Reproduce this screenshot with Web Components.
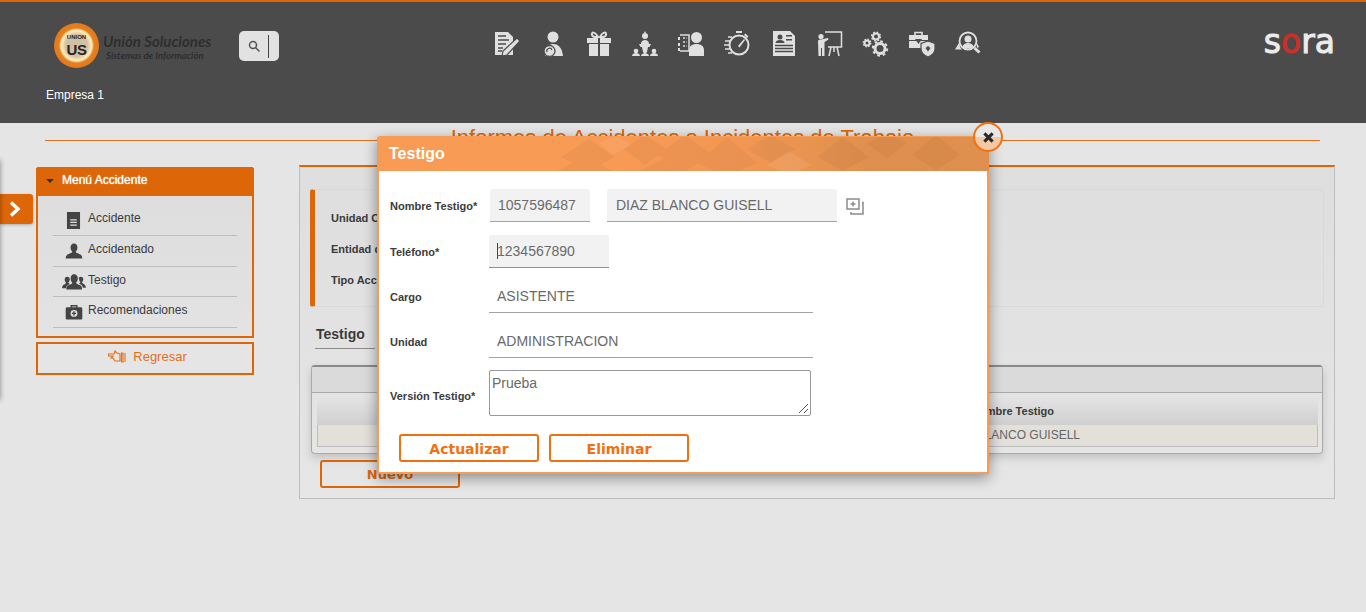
<!DOCTYPE html>
<html lang="es">
<head>
<meta charset="utf-8">
<title>Testigo</title>
<style>
  html, body { margin: 0; height: 100%; }
  body { background: #e5e5e5; font-family: "Liberation Sans", Arial, sans-serif; position: relative; height: 612px; overflow: hidden; }
</style>
</head>
<body>
<app-header></app-header>
<page-title>Informes de Accidentes o Incidentes de Trabajo</page-title>
<page-body></page-body>
<side-tab></side-tab>
<testigo-modal></testigo-modal>

<script>
  const BG = '#4b4b4b';
  // Iconos de la barra superior y del menu lateral (viewBox 26x26)
  const ICONOS = {
    informe: `<path d="M1 1h13l5 5v18H1z"/><path fill="none" stroke="${BG}" stroke-width="1.3" d="M4 5h8M4 9h11M4 13h8M4 17h5M4 20h4"/><path stroke="${BG}" stroke-width="1.2" d="M23 7l3 3L13 24l-5 1 1-5z"/>`,
    persona: `<circle cx="13" cy="6" r="5.5"/><path d="M5 25c0-8 3-12 8-12s9 3 10 12z"/><circle cx="9.500" cy="20" r="5.500" stroke="${BG}" stroke-width="1.300"/><path fill="none" stroke="${BG}" stroke-width="1.200" d="M7 21a2.500 2.500 0 0 1 5-2"/>`,
    regalo: `<path fill="none" stroke="currentColor" stroke-width="2" d="M12 6C9 0 5 1 6 4s3 2 6 2zM14 6c3-6 7-5 6-2s-3 2-6 2z"/><path d="M1 7h11v5H1zM14 7h11v5H14zM3 13h9v12H3zM14 13h9v12H14z"/>`,
    podio: `<circle cx="13" cy="5" r="3"/><path d="M13 0l1 2h-2zM9 13c0-3 2-4 4-4s4 1 4 4z"/><path d="M7 13h12l-1.500 3H16l-1 5h-4l-1-5H8.500z"/><circle cx="4" cy="20" r="2.300"/><path d="M0 25c0-2 2-3 4-3s4 1 4 3z"/><circle cx="13" cy="21.500" r="1.500"/><path d="M9 25c0-2 2-2.500 4-2.500s4 .5 4 2.500z"/><circle cx="22" cy="20" r="2.300"/><path d="M18 25c0-2 2-3 4-3s4 1 4 3z"/>`,
    cliente: `<circle cx="18.500" cy="6.500" r="5.500"/><path d="M11 25v-6c0-4 3.500-6 7.500-6s7.500 2 7.500 6v6z"/><path fill="none" stroke="currentColor" stroke-width="1.500" d="M2 4h9v16H2"/><path fill="none" stroke="currentColor" stroke-width="1.500" stroke-dasharray="2 1.500" d="M5 7h4M5 11h4M5 15h4"/><path stroke="currentColor" stroke-width="2" fill="none" d="M1 6v3M1 12v3M1 17v3"/>`,
    reloj: `<circle cx="15" cy="14" r="9.500" fill="none" stroke="currentColor" stroke-width="2"/><path d="M12 0h6v2h-6zM21.500 2.500l3 3-1.500 1.500-3-3z"/><path d="M14 15l6-7 1 1-5.500 7.500z"/><path fill="none" stroke="currentColor" stroke-width="1.500" d="M1 10h6M0 14h5M1 18h6M4 6h4M4 22h4"/>`,
    hoja: `<path d="M2 0h17l5 5v20H2z"/><circle cx="9" cy="6" r="2.500" fill="${BG}"/><path fill="${BG}" d="M4.500 12c0-2 2-3 4.500-3s4.500 1 4.500 3zM15 4h6v1.500h-6zM15 8h6v1.500h-6z"/><path fill="none" stroke="${BG}" stroke-width="1.300" d="M4 14.500h18M4 17.500h18M4 20.500h18"/>`,
    tablero: `<circle cx="4" cy="5.500" r="2.600"/><path d="M1 10c0-1 1.500-1.500 3-1.500L11 7l.5 1.500L7.500 11v14H5v-8H4v8H1.500z"/><path fill="none" stroke="currentColor" stroke-width="1.500" d="M8 1h16.500v15H11M14 16l-2 9M20 16l2 9M17 16v5"/>`,
    engranes: `<g fill="none" stroke="currentColor"><circle cx="17" cy="17.500" r="5" stroke-width="3"/><circle cx="17" cy="17.500" r="7.200" stroke-width="2" stroke-dasharray="2.700 2.950"/><circle cx="13" cy="5.500" r="3" stroke-width="2"/><circle cx="13" cy="5.500" r="4.400" stroke-width="1.500" stroke-dasharray="1.800 1.650"/><circle cx="4" cy="12" r="2.500" stroke-width="2"/><circle cx="4" cy="12" r="3.800" stroke-width="1.300" stroke-dasharray="1.500 1.480"/></g>`,
    maletin: `<path fill="none" stroke="currentColor" stroke-width="1.600" d="M6 4V1.500h7V4"/><path d="M0 4h19v5H0zM0 10h19v7H0z"/><path fill="${BG}" d="M6 8h7l-3.500 5z"/><path stroke="${BG}" stroke-width="1.200" d="M19 10l7 2.500V18c0 4-3.500 6.500-7 8-3.500-1.500-7-4-7-8v-5.500z"/><path fill="${BG}" d="M19 15l2.500 2-2.500 3.500-2.500-3.500z"/>`,
    buscar: `<circle cx="13" cy="10" r="8.500" fill="none" stroke="currentColor" stroke-width="1.800"/><circle cx="13" cy="8" r="3.500"/><path d="M7.500 16c.5-3 3-4 5.500-4s5 1 5.500 4c-3 2-8 2-11 0z"/><path d="M4.500 11L0 18.500h7L5 16zM21.500 11l2.500 5-2 1z"/><path stroke="currentColor" stroke-width="3" d="M19.500 17l5 4.500"/>`,
    doc: `<path d="M3 0h20v26H3z"/><path fill="none" stroke="#e0e0e0" stroke-width="1.800" d="M8 12h10M8 16h10M8 20h10"/>`,
    usuario: `<path d="M13 2c3.500 0 5 2.500 5 6 0 2.500-1 4.500-2.500 6 0 2 5.500 2.500 8 5 1 1 1.500 3 1.500 5H1c0-2 .5-4 1.500-5 2.500-2.500 8-3 8-5C9 12.500 8 10.500 8 8c0-3.500 1.500-6 5-6z"/>`,
    grupo: `<path d="M13 5c3 0 4.500 2 4.500 5 0 2-1 4-2 5 0 2 4.500 2 6 4 1 1 1 3 1 4H4c0-1 0-3 1-4 1.500-2 6-2 6-4-1-1-2-3-2-5 0-3 1.500-5 4-5z"/><path d="M5 8c2 0 3 1.500 3 3 0 1.500-.5 3-1.500 3.500 0 1 .5 1.500 1.500 2-2 1-4 2-4.500 5H-1c0-2 .5-3 1.500-4 1-.5 3-1.500 3-2.500-1-1-1.500-2.500-1.500-3.500C2 9.500 3 8 5 8zM21 8c2 0 3 1.500 3 3 0 1-.5 2.500-1.500 3.500 0 1 2 2 3 2.500 1 1 1.500 2 1.500 4h-3.500c-.5-3-2.500-4-4.500-5 1-.5 1.500-1 1.500-2-1-.5-1.500-2-1.500-3.500C18 9.500 19 8 21 8z"/>`,
    botiquin: `<path fill-rule="evenodd" d="M8 6V3h10v3h5c1 0 2 1 2 2v14c0 1-1 2-2 2H3c-1 0-2-1-2-2V8c0-1 1-2 2-2zm2 0h6V5h-6z"/><circle cx="13" cy="15" r="5" fill="#e0e0e0"/><path stroke="currentColor" stroke-width="2" d="M13 12v6M10 15h6"/>`
  };

  class AppIcon extends HTMLElement {
    constructor() {
      super();
      const size = this.getAttribute('size') || 26;
      const svgStyle = 'display:block;overflow:visible';
      this.attachShadow({ mode: 'open' }).innerHTML = `
        <style>:host { display: block; width: ${size}px; height: ${size}px; flex: none; }</style>
        <svg width="${size}" height="${size}" viewBox="0 0 26 26" fill="currentColor" style="${svgStyle}">${ICONOS[this.getAttribute('name')]}</svg>`;
    }
  }

  class AppHeader extends HTMLElement {
    constructor() {
      super();
      const iconos = ['informe', 'persona', 'regalo', 'podio', 'cliente', 'reloj', 'hoja', 'tablero', 'engranes', 'maletin', 'buscar'];
      this.attachShadow({ mode: 'open' }).innerHTML = `
        <style>
          :host { display: block; height: 121px; background: ${BG}; border-top: 2px solid #dd6708; box-sizing: content-box; }
          .top { display: flex; align-items: flex-start; padding: 21px 31px 0 54px; height: 46px; }
          .logo { display: flex; width: 185px; flex: none; }
          .ring { width: 45px; height: 45px; border-radius: 50%; flex: none; box-sizing: border-box; background: radial-gradient(circle closest-side, #cfc0a6 0 48%, #f2cfa0 56%, #fbeec4 66%, #f0c98a 72%, #e5801f 78%, #e3791d 100%); display: flex; flex-direction: column; align-items: center; justify-content: center; color: #262626; font-weight: 700; }
          .ring small { font-size: 6px; line-height: 7px; }
          .ring b { font-size: 15px; line-height: 17px; letter-spacing: -.5px; }
          .name { margin: 9px 0 0 4px; color: #2e2e2e; font: italic 700 15px/18px Lato, sans-serif; white-space: nowrap; }
          .name span { display: block; font-size: 9.500px; line-height: 11px; padding-left: 3px; }
          .search { width: 40px; height: 30px; margin: 8px 0 0 0; background: #e2e2e2; border-radius: 5px; display: flex; align-items: center; box-sizing: border-box; padding-left: 9px; flex: none; }
          .search i { display: block; width: 1px; height: 23px; background: #444; margin-left: 8px; }
          nav { display: flex; gap: 20.100px; color: #e0e0e0; margin: 8px 0 0 215px; flex: none; filter: blur(.3px); }
          .sora { margin-left: auto; margin-top: 1px; color: #ececec; font: 400 33px/36px "DejaVu Sans", sans-serif; -webkit-text-stroke: 1px currentColor; }
          .sora em { font-style: normal; color: #c9302a; }
          .empresa { margin: 19px 0 0 46px; color: #fff; font-size: 12px; line-height: 14px; }
        </style>
        <div class="top">
          <div class="logo">
            <div class="ring"><small>UNION</small><b>US</b></div>
            <div class="name">Unión Soluciones<span>Sistemas de Información</span></div>
          </div>
          <div class="search">
            <svg width="12" height="12" viewBox="0 0 12 12" fill="none" stroke="#555" stroke-width="1.500"><circle cx="5" cy="5" r="3.500"/><path d="M7.500 7.500l4 4"/></svg>
            <i></i>
          </div>
          <nav>${iconos.map(n => `<app-icon name="${n}"></app-icon>`).join('')}</nav>
          <div class="sora">s<em>o</em>ra</div>
        </div>
        <div class="empresa">Empresa 1</div>`;
    }
  }

  class PageTitle extends HTMLElement {
    constructor() {
      super();
      this.attachShadow({ mode: 'open' }).innerHTML = `
        <style>
          :host { display: block; margin: 0 46px 0 45px; height: 17px; border-bottom: 1px solid #e2701c; text-align: center; color: #dd6708; font-size: 22px; line-height: 29px; white-space: nowrap; }
        </style>
        <slot></slot>`;
    }
  }

  class MenuItem extends HTMLElement {
    constructor() {
      super();
      this.attachShadow({ mode: 'open' }).innerHTML = `
        <style>
          :host { display: flex; align-items: center; box-sizing: border-box; padding-bottom: 4px; border-bottom: 1px solid #bdbdbd; color: #3a3a3a; font-size: 12px; }
          .ico { width: 35px; display: flex; justify-content: center; color: #444; padding-left: 6px; box-sizing: border-box; margin-top: ${this.getAttribute('icon') === 'doc' ? 5 : 3}px; }
        </style>
        <div class="ico"><app-icon name="${this.getAttribute('icon')}" size="${this.getAttribute('size') || 18}"></app-icon></div>
        <slot></slot>`;
    }
  }

  class SideMenu extends HTMLElement {
    constructor() {
      super();
      this.attachShadow({ mode: 'open' }).innerHTML = `
        <style>
          :host { display: block; margin-top: 2px; }
          .box { border: 2px solid #dd6708; border-top: 0; border-radius: 3px 3px 0 0; background: linear-gradient(#dcdcdc, #e3e3e3); height: 171px; box-sizing: border-box; }
          h3 { margin: 0 -2px; height: 29px; box-sizing: border-box; padding: 0 0 3px 10px; background: #dd6708; border-radius: 3px 3px 0 0; color: #fff; font-size: 12px; font-weight: 400; display: flex; align-items: center; text-shadow: 0 0 1px #fff; }
          h3 i { width: 0; height: 0; border: 4px solid transparent; border-top-color: #333; border-bottom: 0; margin: 2px 8px 0 0; }
          nav { margin: 9px 15px 0; display: grid; grid-template-rows: 31px 31px 30px 31px; }
          .back { margin-top: 4px; height: 33px; box-sizing: border-box; padding: 0 0 4px 5px; border: 2px solid #dd6708; display: flex; align-items: center; justify-content: center; gap: 7px; color: #e2701c; font-size: 13px; }
        </style>
        <div class="box">
          <h3><i></i>Menú Accidente</h3>
          <nav>
            <menu-item icon="doc" size="17">Accidente</menu-item>
            <menu-item icon="usuario">Accidentado</menu-item>
            <menu-item icon="grupo" size="22">Testigo</menu-item>
            <menu-item icon="botiquin">Recomendaciones</menu-item>
          </nav>
        </div>
        <div class="back">
          <svg width="18" height="14" viewBox="0 0 18 14" fill="none" stroke="#e2701c" stroke-width="1.100"><path d="M.5 4H6l1-3 2 2 3 1v7H7L5 8H3l2-2H.5zM13.500 3h1.500v9h-1.500zM17 3v9"/></svg>
          Regresar
        </div>`;
    }
  }

  class MainPanel extends HTMLElement {
    constructor() {
      super();
      this.attachShadow({ mode: 'open' }).innerHTML = `
        <style>
          :host { display: block; height: 334px; box-sizing: border-box; border: 1px solid #bdbdbd; border-top: 2px solid #dd6708; background: linear-gradient(#dedede, #e6e6e6); padding: 22px 10px 0; color: #3a3a3a; }
          .info { height: 118px; box-sizing: border-box; border: 1px solid #d9d9d9; border-left: 5px solid #dd6708; border-radius: 3px; padding: 12px 16px; display: grid; grid-auto-rows: 31px; font-size: 11px; font-weight: 700; align-items: center; }
          h4 { margin: 19px 0 0 5px; width: 59px; height: 22px; padding-left: 1px; font-size: 14px; line-height: 17px; border-bottom: 1px solid #8c8c8c; white-space: nowrap; }
          .tabla { margin: 16px 1px 0; height: 89px; box-sizing: border-box; border: 1px solid #aaa; border-top: 2px solid #8a8a8a; border-radius: 4px; box-shadow: 0 4px 8px rgba(0,0,0,.15); padding: 0; }
          .bar { height: 25px; background: #dadada; border-bottom: 1px solid #aaa; }
          .grid { margin: 5px 4px 0 5px; }
          .th { height: 27px; background: linear-gradient(#e3e3e3, #cfcfcf); font-size: 11px; font-weight: 700; line-height: 27px; padding-left: 654px; }
          .td { height: 22px; box-sizing: border-box; background: #e3dfd9; border: 1px solid #bdbdbd; border-top: 0; font-size: 12px; line-height: 21px; padding-left: 628px; color: #666; }
          .nuevo { display: block; margin: 6px 0 0 10px; width: 140px; height: 28px; box-sizing: border-box; border: 2px solid #dd6708; border-radius: 3px; text-align: center; color: #dd6708; font: 700 13px/26px "DejaVu Sans", sans-serif; }
        </style>
        <div class="info">
          <div>Unidad Organizacional</div>
          <div>Entidad de Salud</div>
          <div>Tipo Accidente</div>
        </div>
        <h4>Testigo</h4>
        <div class="tabla">
          <div class="bar"></div>
          <div class="grid">
            <div class="th">Nombre Testigo</div>
            <div class="td">DIAZ BLANCO GUISELL</div>
          </div>
        </div>
        <div class="nuevo">Nuevo</div>`;
    }
  }

  class PageBody extends HTMLElement {
    constructor() {
      super();
      this.attachShadow({ mode: 'open' }).innerHTML = `
        <style>
          :host { display: grid; grid-template-columns: 218px 1036px; column-gap: 45px; padding: 24px 31px 0 36px; }
        </style>
        <side-menu></side-menu>
        <main-panel></main-panel>`;
    }
  }

  // Pestana que abre el menu lateral y la sombra del cajon cerrado
  class SideTab extends HTMLElement {
    constructor() {
      super();
      this.attachShadow({ mode: 'open' }).innerHTML = `
        <style>
          :host { position: absolute; left: 0; top: 194px; width: 33px; height: 30px; background: #dd6708; border-radius: 0 3px 3px 0; display: flex; align-items: center; justify-content: center; box-shadow: 0 1px 3px rgba(0,0,0,.25); padding-right: 3px; box-sizing: border-box; }
          .sombra { position: absolute; left: -4px; top: -34px; width: 4px; height: 240px; box-shadow: 0 0 5px rgba(0,0,0,.45); }
        </style>
        <div class="sombra"></div>
        <svg width="14" height="16" viewBox="0 0 14 16" fill="none" stroke="#fff" stroke-width="3.500"><path d="M3 1.500L10 8l-7 6.500"/></svg>`;
    }
  }

  class FormRow extends HTMLElement {
    constructor() {
      super();
      this.attachShadow({ mode: 'open' }).innerHTML = `
        <style>
          :host { display: grid; grid-template-columns: 99px auto; align-items: center; }
          label { font-size: 11px; font-weight: 700; color: #3c3c3c; padding-top: var(--label-pt, 0); white-space: nowrap; }
          .campos { display: flex; align-items: center; gap: 17px; }
        </style>
        <label>${this.getAttribute('label')}</label>
        <div class="campos"><slot></slot></div>`;
    }
  }

  class TextField extends HTMLElement {
    constructor() {
      super();
      this.attachShadow({ mode: 'open' }).innerHTML = `
        <style>
          :host { display: block; height: 33px; box-sizing: border-box; color: #6a6a6a; font-size: 14px; line-height: 33px; padding-left: 8px; border-bottom: 1px solid #a3a3a3; white-space: nowrap; }
          :host([filled]) { background: #f2f2f2; border-radius: 3px 3px 0 0; }
          :host([focused]) { background: #f2f2f2; border-radius: 3px 3px 0 0; border-bottom-color: #e67a23; }
          i { display: inline-block; width: 1px; height: 16px; background: #444; vertical-align: -3px; margin-right: -1px; }
        </style>
        ${this.hasAttribute('focused') ? '<i></i>' : ''}<slot></slot>`;
    }
  }

  class ActionButton extends HTMLElement {
    constructor() {
      super();
      this.attachShadow({ mode: 'open' }).innerHTML = `
        <style>
          :host { display: block; width: 140px; height: 28px; box-sizing: border-box; border: 2px solid #f2700d; border-radius: 3px; text-align: center; color: #f2700d; font: 700 14px/27px "DejaVu Sans", sans-serif; }
        </style>
        <slot></slot>`;
    }
  }

  class TestigoModal extends HTMLElement {
    constructor() {
      super();
      this.attachShadow({ mode: 'open' }).innerHTML = `
        <style>
          :host { position: absolute; left: 377px; top: 136px; width: 612px; height: 338px; box-sizing: border-box; background: #fff; border: 2px solid #f79b55; border-top-width: 1px; border-radius: 3px 3px 0 0; box-shadow: 0 4px 14px rgba(0,0,0,.4); }
          header { height: 34px; margin: 0 -2px; position: relative; overflow: hidden; background: linear-gradient(90deg, #f89b55 0 35%, #f29753 60%, #e0904e 80%); color: #fff; font-size: 16px; font-weight: 700; line-height: 33px; padding-left: 12px; border-radius: 3px 3px 0 0; }
          header svg { position: absolute; left: 150px; top: 0; }
          .cerrar { position: absolute; left: 594px; top: -15px; width: 30px; height: 30px; box-sizing: border-box; border-radius: 50%; border: 2px solid #f2700d; background: linear-gradient(#e8e8e8 50%, #f4c8a4 50%); display: flex; align-items: center; justify-content: center; }
          form { display: flex; flex-direction: column; padding: 18px 0 0 11px; }
          .grip { position: absolute; right: 2px; bottom: 2px; }
          .area { position: relative; width: 322px; height: 46px; box-sizing: border-box; border: 1px solid #999; border-radius: 2px; color: #6a6a6a; font-size: 14px; line-height: 16px; padding: 4px 2px; }
          .acciones { display: flex; gap: 10px; margin: 18px 0 0 9px; }
          .copiar { margin-left: -8px; }
        </style>
        <header>Testigo
          <svg width="460" height="34" viewBox="0 0 460 34" fill="#000" fill-opacity=".035">
            <path d="M34 20L62 2l26 18-26 14zM96 12l22-14 22 14-22 16zM130 18l28-20 28 20-28 16zM30 34l28-14 28 14zM170 26l30-26 30 26-30 14zM220 12l24-14 24 14-24 14zM290 20l26-20 26 20-26 14zM340 6l20-10 20 10-20 16zM385 18l24-20 24 20-24 16zM112 34l24-12 24 12z"/>
            <path fill="#fff" fill-opacity=".08" d="M72 6l18-8 14 10-18 10zM240 28l22-14 22 14-22 10z"/>
          </svg>
        </header>
        <div class="cerrar"><svg width="11" height="11" viewBox="0 0 12 12" stroke="#2b2b2b" stroke-width="3.400"><path d="M1.500 1.500l9 9M10.500 1.500l-9 9"/></svg></div>
        <form>
          <form-row label="Nombre Testigo*">
            <text-field filled style="width:100px;margin-left:1px">1057596487</text-field>
            <text-field filled style="width:230px;padding-left:9px">DIAZ BLANCO GUISELL</text-field>
            <svg class="copiar" width="18" height="18" viewBox="0 0 18 18" fill="none" stroke="#8c8c8c" stroke-width="1.500"><path d="M1 2h12v10H1zM16 5.500h1v11.500H5v-2M4.500 7h5M7 4.500v5"/></svg>
          </form-row>
          <form-row label="Teléfono*" style="margin-top:13px">
            <text-field focused style="width:120px">1234567890</text-field>
          </form-row>
          <form-row label="Cargo" style="margin-top:12px">
            <text-field style="width:324px">ASISTENTE</text-field>
          </form-row>
          <form-row label="Unidad" style="margin-top:12px">
            <text-field style="width:324px">ADMINISTRACION</text-field>
          </form-row>
          <form-row label="Versión Testigo*" style="margin-top:12px;--label-pt:6px">
            <div class="area">Prueba
              <svg class="grip" width="9" height="9" viewBox="0 0 9 9" stroke="#555" fill="none"><path d="M0 9l9-9M5 9l4-4"/></svg>
            </div>
          </form-row>
          <div class="acciones">
            <action-button>Actualizar</action-button>
            <action-button>Eliminar</action-button>
          </div>
        </form>`;
    }
  }

  customElements.define('app-icon', AppIcon);
  customElements.define('app-header', AppHeader);
  customElements.define('page-title', PageTitle);
  customElements.define('menu-item', MenuItem);
  customElements.define('side-menu', SideMenu);
  customElements.define('main-panel', MainPanel);
  customElements.define('page-body', PageBody);
  customElements.define('side-tab', SideTab);
  customElements.define('form-row', FormRow);
  customElements.define('text-field', TextField);
  customElements.define('action-button', ActionButton);
  customElements.define('testigo-modal', TestigoModal);
</script>
</body>
</html>
